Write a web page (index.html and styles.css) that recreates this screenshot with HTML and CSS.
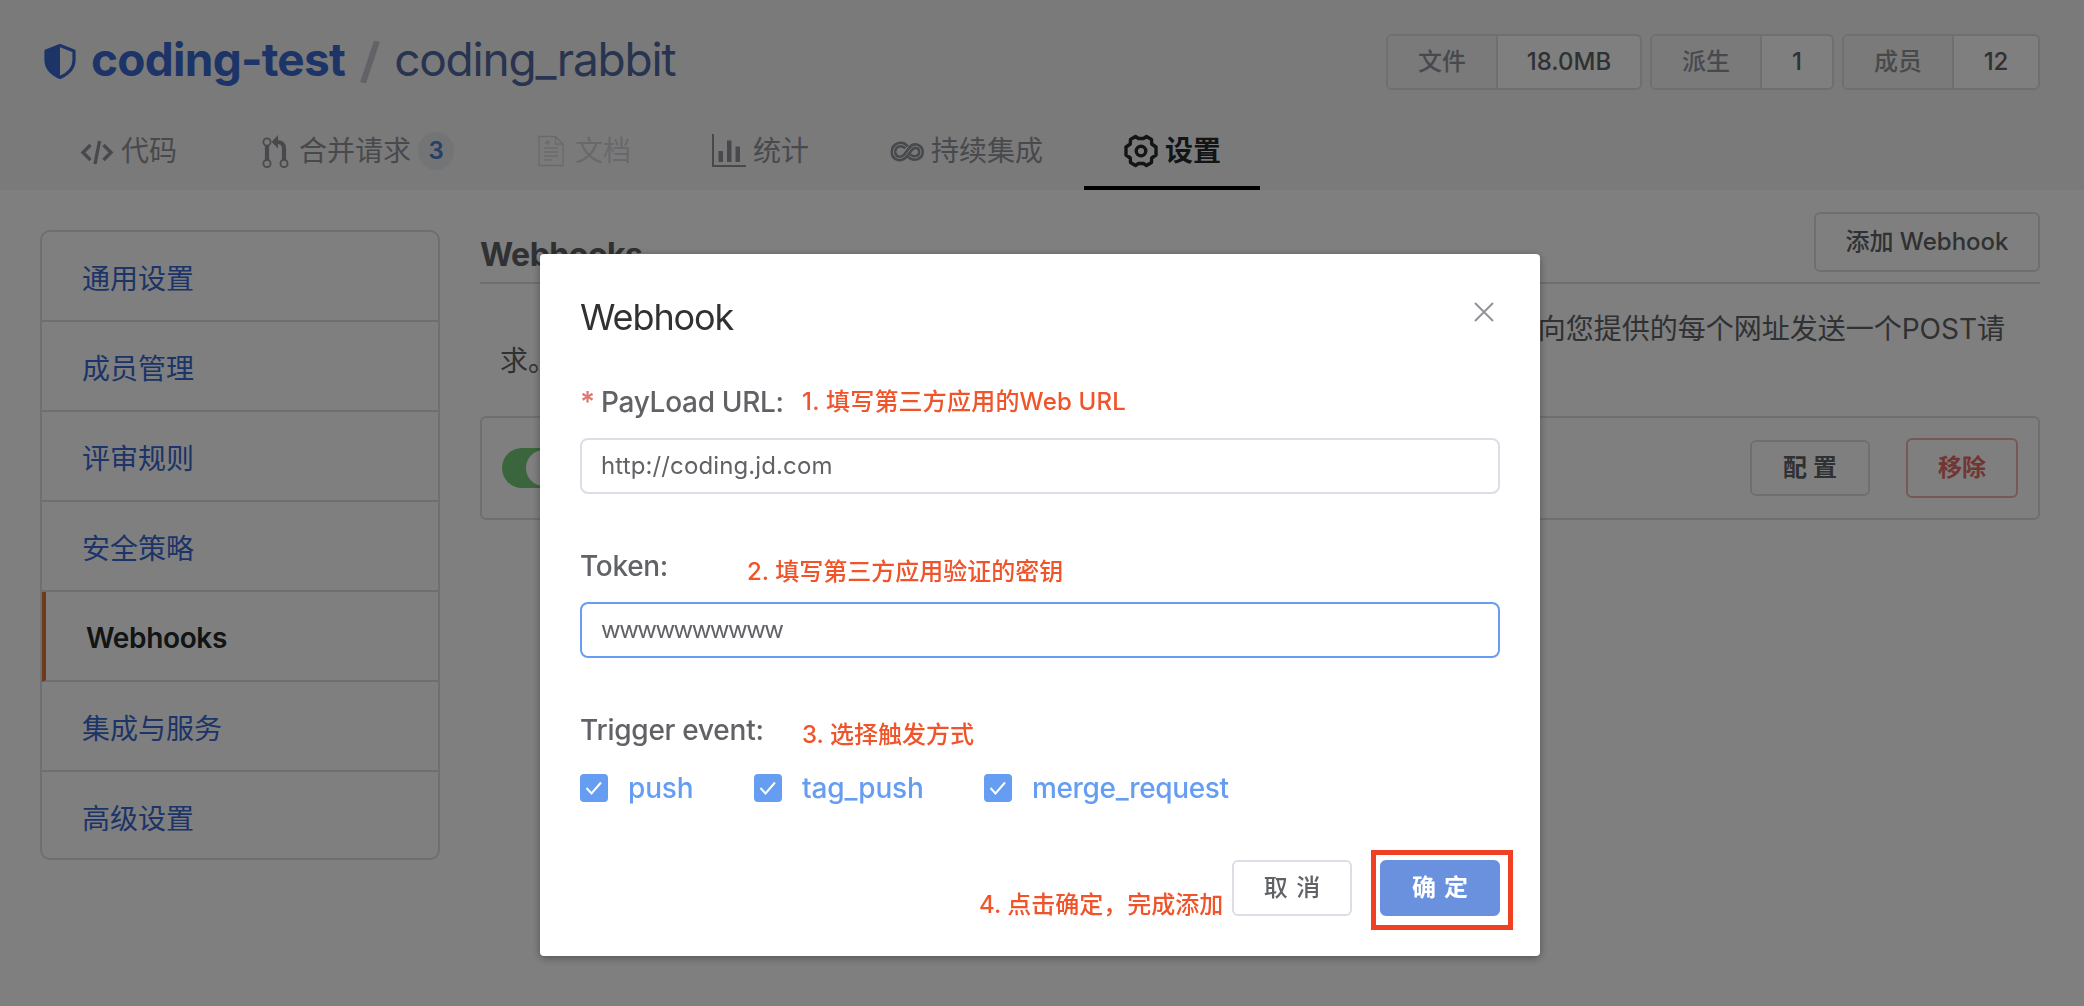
FILE: index.html
```html
<!DOCTYPE html>
<html lang="zh-CN">
<head>
<meta charset="utf-8">
<title>coding-test / coding_rabbit</title>
<link rel="stylesheet" href="styles.css">
</head>
<body>
<header class="header">
  <div class="header-top">
    <h1 class="repo">
      <svg class="shield" viewBox="0 0 32 36"><path d="M16 2.500 30 8v9c0 8-6 14-14 17.500C8 31 2 25 2 17V8z" fill="none" stroke="currentColor" stroke-width="3.200" stroke-linejoin="round"/><path d="M16 2v32C8 30.500 2 25 2 17V8z" fill="currentColor"/></svg>
      <a class="owner">coding-test</a><svg class="slash" viewBox="0 0 20 42"><path d="M3 42 17 0" stroke="currentColor" stroke-width="6"/></svg><a class="name">coding_rabbit</a>
    </h1>
    <div class="stats">
      <div class="stat"><span class="stat-label">文件</span><span class="stat-value wide">18.0MB</span></div>
      <div class="stat"><span class="stat-label">派生</span><span class="stat-value">1</span></div>
      <div class="stat"><span class="stat-label">成员</span><span class="stat-value two">12</span></div>
    </div>
  </div>
  <nav class="tabs">
    <a class="tab"><svg class="icon" viewBox="0 0 34 34"><path d="M10.500 11 3 18.500l7.500 7.500M23.500 11l7.500 7.500-7.500 7.500M19.500 7l-4.500 23" fill="none" stroke="currentColor" stroke-width="3.400"/></svg>代码</a>
    <a class="tab"><svg class="icon" viewBox="0 0 34 34"><g fill="none" stroke="currentColor"><circle cx="9" cy="8" r="3.600" stroke-width="1.800"/><circle cx="9" cy="29.500" r="3.600" stroke-width="1.800"/><circle cx="26" cy="29.500" r="3.600" stroke-width="1.800"/><path d="M9 11.500v14.500M26 26V14.500c0-4.500-2.500-6.500-7-6.500" stroke-width="4.200"/></g><path d="M13.500 8 20 1v13.500z" fill="currentColor"/></svg>合并请求<span class="badge">3</span></a>
    <a class="tab disabled"><svg class="icon" viewBox="0 0 34 34"><path d="M5 2.500h16.500L29 10v21.500H5zM21.500 2.500V10H29M10 14h14M10 18h14M10 22h14M10 26h7M11 10l2-3 1 3 2-3" fill="none" stroke="currentColor" stroke-width="1.300"/></svg>文档</a>
    <a class="tab"><svg class="icon" viewBox="0 0 34 34"><path d="M1 0v32h33" fill="none" stroke="currentColor" stroke-width="2"/><path d="M6.500 17h4.500v11H6.500zM15 6.500h4.500V28H15zM23.500 12.500h4.500V28h-4.500z" fill="currentColor"/></svg>统计</a>
    <a class="tab"><svg class="icon" viewBox="0 0 34 34"><g fill="none"><path d="M16.500 13.500C12.500 8 3.500 10.500 3.500 18S12 26 15.500 21.500L20.500 15C24 10 31 12 31 18S23.500 26 19 21.500" stroke="currentColor" stroke-width="6"/><path d="M16.500 13.500C12.500 8 3.500 10.500 3.500 18S12 26 15.500 21.500L20.500 15C24 10 31 12 31 18S23.500 26 19 21.500" stroke="#f5f5f5" stroke-width="1"/></g></svg>持续集成</a>
    <a class="tab active"><svg class="icon" viewBox="0 0 34 34"><g fill="none" stroke="currentColor" stroke-width="3.400" stroke-linejoin="round"><path d="M11.500 2.500 14.500 4.500h5l3-2 5 3 .2 4.500 4.300 3v8l-4.300 3-.2 4.500-5 3-3-2h-5l-3 2-5-3-.2-4.500L2 21v-8l4.300-3 .2-4.500z"/><circle cx="17" cy="17" r="4.800"/></g></svg>设置</a>
  </nav>
</header>
<main class="content">
  <aside class="sidebar">
    <a class="side-item">通用设置</a>
    <a class="side-item">成员管理</a>
    <a class="side-item">评审规则</a>
    <a class="side-item">安全策略</a>
    <a class="side-item current">Webhooks</a>
    <a class="side-item">集成与服务</a>
    <a class="side-item">高级设置</a>
  </aside>
  <section class="panel">
    <div class="panel-head"><h2 class="panel-title">Webhooks</h2><button class="btn add">添加 Webhook</button></div>
    <p class="intro"><span class="intro-line">向您提供的每个网址发送一个POST请</span><span>求。</span></p>
    <div class="hook-row">
      <span class="switch"></span>
      <button class="btn config">配 置</button>
      <button class="btn remove">移除</button>
    </div>
  </section>
</main>
<div class="overlay">
  <div class="modal">
    <div class="modal-head"><h3 class="modal-title">Webhook</h3><svg class="close" viewBox="0 0 20 20"><path d="M1 1 19 19M19 1 1 19" stroke="currentColor" stroke-width="2"/></svg></div>
    <label class="label"><i class="star">*</i>PayLoad URL:</label>
    <div class="input">http://coding.jd.com</div>
    <label class="label">Token:</label>
    <div class="input focus">wwwwwwwwww</div>
    <label class="label trigger">Trigger event:</label>
    <div class="checks">
      <span class="check c1"><svg class="box" viewBox="0 0 28 28"><rect width="28" height="28" rx="4" fill="#659df2"/><path d="m6.500 14 5 5.500 9.500-11" fill="none" stroke="#fff" stroke-width="2"/></svg>push</span>
      <span class="check c2"><svg class="box" viewBox="0 0 28 28"><rect width="28" height="28" rx="4" fill="#659df2"/><path d="m6.500 14 5 5.500 9.500-11" fill="none" stroke="#fff" stroke-width="2"/></svg>tag_push</span>
      <span class="check c3"><svg class="box" viewBox="0 0 28 28"><rect width="28" height="28" rx="4" fill="#659df2"/><path d="m6.500 14 5 5.500 9.500-11" fill="none" stroke="#fff" stroke-width="2"/></svg>merge_request</span>
    </div>
    <div class="modal-foot"><button class="btn cancel">取 消</button><button class="btn ok">确 定</button></div>
    <span class="note n1">1. 填写第三方应用的Web URL</span>
    <span class="note n2">2. 填写第三方应用验证的密钥</span>
    <span class="note n3">3. 选择触发方式</span>
    <span class="note n4">4. 点击确定，完成添加</span>
    <span class="frame"></span>
  </div>
</div>
</body>
</html>
```
FILE: styles.css
```css
* { box-sizing: border-box; }
body { margin: 0; background: #fff; color: #606266; font-family: Inter, "Noto Sans CJK SC", sans-serif; font-size: 28px; line-height: 32px; height: 1006px; overflow: hidden; }
h1, h2, h3, p { margin: 0; font-weight: 400; }

.header { height: 190px; background: #f5f5f5; display: flex; flex-direction: column; justify-content: space-between; }
.header-top { display: flex; justify-content: space-between; align-items: flex-start; padding: 34px 44px 0; }
.repo { display: flex; align-items: center; height: 50px; font-size: 46px; color: #3868d0; }
.shield { width: 32px; height: 36px; margin: 3px 15px 0 0; }
.owner { font-weight: 700; letter-spacing: -.75px; }
.slash { width: 20px; height: 42px; margin: 5px 14px 0 15px; color: #c3c7cf; }
.name { color: #5068a0; letter-spacing: -1.2px; }
.stats { display: flex; gap: 8px; }
.stat { display: flex; height: 56px; border: 2px solid #dcdfe6; border-radius: 6px; overflow: hidden; font-size: 24px; font-weight: 500; background: #fff; }
.stat-label { width: 110px; background: #f5f5f5; color: #909399; border-right: 2px solid #dcdfe6; display: flex; align-items: center; justify-content: center; }
.stat-value { width: 70px; display: flex; align-items: center; justify-content: center; color: #606266; }
.stat-value.wide { width: 142px; }
.stat-value.two { width: 84px; }

.tabs { display: flex; padding-left: 40px; }
.tab { display: flex; align-items: center; height: 82px; padding: 9px 40px 1px; margin-right: 1px; color: #909399; border-bottom: 4px solid transparent; }
.tab.active { padding-right: 39px; color: #26282b; font-weight: 700; border-bottom-color: #000; }
.tab.disabled { color: #d0d3d9; }
.icon { width: 34px; height: 34px; margin: -1px 7px 0 0; }
.badge { margin-left: 7px; margin-right: -1px; width: 36px; height: 38px; border-radius: 18px; background: #e6e8ec; color: #4a80c8; font-size: 24px; font-weight: 600; display: flex; align-items: center; justify-content: center; }

.content { display: flex; gap: 40px; padding: 22px 44px 0 40px; align-items: flex-start; }
.sidebar { width: 400px; margin-top: 18px; border: 2px solid #dcdee6; border-radius: 10px; }
.side-item { display: flex; align-items: center; height: 90px; padding: 5px 0 0 40px; border-bottom: 2px solid #dcdee6; color: #3868d0; }
.side-item:last-child { height: 86px; padding-top: 7px; border-bottom: 0; }
.side-item.current { padding-top: 4px; border-left: 4px solid #e17238; color: #26282b; font-weight: 600; letter-spacing: -.35px; }

.panel { flex: 1; }
.panel-head { display: flex; justify-content: space-between; height: 72px; border-bottom: 2px solid #dcdee6; }
.panel-title { font-size: 32px; font-weight: 700; padding-top: 27px; letter-spacing: -.5px; }
.btn { display: flex; align-items: center; justify-content: center; padding: 0; height: 56px; border: 2px solid #dcdee6; border-radius: 6px; background: #fff; color: #606266; font: 500 24px/1 Inter, "Noto Sans CJK SC", sans-serif; white-space: pre; }
.add { width: 226px; height: 60px; }
.intro { padding: 29px 35px 0 20px; display: flex; flex-direction: column; }
.intro-line { align-self: flex-end; }
.hook-row { margin-top: 39px; height: 104px; border: 2px solid #dcdee6; border-radius: 6px; display: flex; align-items: center; padding: 0 20px; }
.switch { width: 64px; height: 40px; border-radius: 20px; background: radial-gradient(circle at 42px 20px, #fff 17.500px, #76ca78 18.500px); margin-right: auto; }
.config { width: 120px; font-weight: 600; }
.remove { width: 112px; height: 60px; margin-left: 36px; color: #e26d67; border-color: #eeb0ab; font-weight: 600; }

.overlay { position: fixed; inset: 0; background: rgba(0, 0, 0, .5); display: flex; justify-content: center; align-items: flex-start; padding: 254px 4px 0 0; }
.modal { position: relative; width: 1000px; height: 702px; padding: 40px; background: #fff; border-radius: 4px; box-shadow: 0 2px 8px rgba(0, 0, 0, .35); }
.modal-head { display: flex; justify-content: space-between; height: 92px; color: #303133; }
.modal-title { font-size: 36px; line-height: 46px; letter-spacing: -1.1px; }
.close { width: 20px; height: 20px; margin: 8px 6px 0 0; color: #909399; }
.label { display: flex; height: 52px; font-weight: 500; color: #606266; letter-spacing: -.3px; }
.label.trigger { height: 60px; letter-spacing: -.25px; }
.star { font-style: normal; font-weight: 600; color: #e0786f; width: 21px; }
.input { height: 56px; border: 2px solid #dcdee6; border-radius: 8px; padding: 0 19px; line-height: 52px; font-size: 24px; letter-spacing: .12px; margin-bottom: 56px; }
.input.focus { border-color: #659df2; letter-spacing: -1.5px; }
.checks { display: flex; height: 28px; color: #659df2; font-weight: 500; }
.check { display: flex; align-items: center; gap: 20px; letter-spacing: -.15px; }
.c1 { width: 174px; }
.c2 { width: 230px; }
.c3 { letter-spacing: -.35px; }
.box { width: 28px; height: 28px; flex: none; }
.modal-foot { display: flex; justify-content: flex-end; gap: 28px; margin-top: 58px; }
.cancel, .ok { width: 120px; word-spacing: 2px; }
.ok { background: #6991de; border-color: #6991de; color: #fff; font-weight: 600; }

.note { position: absolute; color: #f0542a; font-size: 24px; font-weight: 500; line-height: 32px; white-space: nowrap; }
.n1 { left: 262px; top: 132px; letter-spacing: .2px; }
.n2 { left: 207px; top: 302px; }
.n3 { left: 262px; top: 465px; }
.n4 { left: 439px; top: 635px; }
.frame { position: absolute; left: 831px; top: 596px; width: 142px; height: 80px; border: 5px solid #f04023; }
```
